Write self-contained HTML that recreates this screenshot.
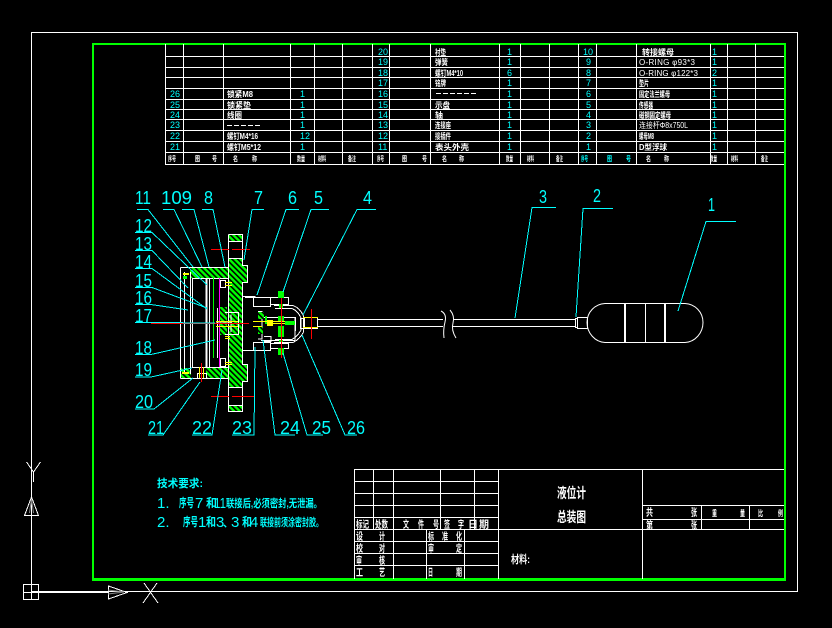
<!DOCTYPE html>
<html><head><meta charset="utf-8"><title>液位计总装图</title>
<style>
html,body{margin:0;padding:0;background:#000;width:832px;height:628px;overflow:hidden}
svg{display:block;position:absolute;left:0;top:0}
text{font-family:"Liberation Sans","Noto Sans CJK SC",sans-serif}
.w{fill:#fff}.c{fill:#0ff}
.n{font-size:9px;fill:#0ff}
.t{font-size:8px;fill:#fff;font-weight:700}
.h{font-size:7px;fill:#fff;font-weight:700}
.hc{font-size:7px;fill:#0ff;font-weight:700}
.l{font-size:18px;fill:#0ff}
.b{font-size:10px;fill:#fff;font-weight:700}
.k{font-size:11px;fill:#0ff;font-weight:700}
.d{font-size:15px;fill:#0ff}
</style></head><body>
<svg width="832" height="628" viewBox="0 0 832 628" xmlns="http://www.w3.org/2000/svg">
<defs>
<pattern id="h" width="4" height="4" patternUnits="userSpaceOnUse" patternTransform="rotate(45)">
<rect width="4" height="4" fill="#000"/><rect width="4" height="2.4" fill="#0f0"/>
</pattern>
</defs>
<rect width="832" height="628" fill="#000"/>

<!-- frame -->
<g shape-rendering="crispEdges" fill="none" stroke="#fff">
<path d="M31.5 32.5H797.5V591.5H31.5Z"/>
</g>
<g fill="#0f0" shape-rendering="crispEdges">
<rect x="92" y="43" width="694" height="2"/>
<rect x="92" y="578" width="694" height="3"/>
<rect x="92" y="43" width="2" height="538"/>
<rect x="784" y="43" width="2" height="538"/>
</g>

<!-- origin icon -->
<g shape-rendering="crispEdges" fill="none" stroke="#fff">
<rect x="23.5" y="584.5" width="15" height="15"/>
<path d="M31.5 584.5V599.5M23.5 592.5H38.5"/>
<path d="M38 592H108" stroke-width="2"/>
<path d="M108.5 586V599L127 592.5Z"/>
<path d="M31.5 497L24.5 515.5H38.5Z"/>
<path d="M26.5 462L33.5 472L40.5 462M33.5 472V482"/>
<path d="M144 583L158 603M157 583L143 603"/>
</g>
<path d="M108 590L124 592M108 594L124 592M29.5 513L31.5 499M33.5 513L31.5 499" stroke="#888" fill="none"/>

<!-- parts table -->
<g shape-rendering="crispEdges" fill="none" stroke="#fff">
<path d="M165 56.5H784M165 67.5H784M165 77.5H784M165 88.5H784M165 99.5H784M165 109.5H784M165 119.5H784M165 130.5H784M165 141.5H784M165 152.5H784M165 164.5H784"/>
<path d="M165.5 44V164M183.5 44V164M223.5 44V164M290.5 44V164M314.5 44V164M342.5 44V164M372.5 44V164M389.5 44V164M430.5 44V164M499.5 44V164M520.5 44V164M549.5 44V164M578.5 44V164M596.5 44V164M636.5 44V164M710.5 44V164M727.5 44V164M755.5 44V164"/>
</g>
<g class="n">
<text x="378" y="55">20</text><text x="378" y="65">19</text><text x="378" y="76">18</text><text x="378" y="86">17</text><text x="378" y="97">16</text><text x="378" y="108">15</text><text x="378" y="118">14</text><text x="378" y="128">13</text><text x="378" y="139">12</text><text x="378" y="150">11</text>
<text x="170" y="97">26</text><text x="170" y="108">25</text><text x="170" y="118">24</text><text x="170" y="128">23</text><text x="170" y="139">22</text><text x="170" y="150">21</text>
<text x="300" y="97">1</text><text x="300" y="108">1</text><text x="300" y="118">1</text><text x="300" y="128">1</text><text x="300" y="139" >12</text><text x="300" y="150">1</text>
<text x="507" y="55">1</text><text x="507" y="65">1</text><text x="507" y="76">6</text><text x="507" y="86">1</text><text x="507" y="97">1</text><text x="507" y="108">1</text><text x="507" y="118">1</text><text x="507" y="128">1</text><text x="507" y="139">1</text><text x="507" y="150">1</text>
<text x="583" y="55">10</text><text x="586" y="65">9</text><text x="586" y="76">8</text><text x="586" y="86">7</text><text x="586" y="97">6</text><text x="586" y="108">5</text><text x="586" y="118">4</text><text x="586" y="128">3</text><text x="586" y="139">2</text><text x="586" y="150">1</text>
<text x="712" y="55">1</text><text x="712" y="65">1</text><text x="712" y="76">2</text><text x="712" y="86">1</text><text x="712" y="97">1</text><text x="712" y="108">1</text><text x="712" y="118">1</text><text x="712" y="128">1</text><text x="712" y="139">1</text><text x="712" y="150">1</text>
</g>
<g class="t">
<text x="227" y="97" textLength="26" lengthAdjust="spacingAndGlyphs">锁紧M8</text>
<text x="227" y="108" textLength="24" lengthAdjust="spacingAndGlyphs">锁紧垫</text>
<text x="227" y="118" textLength="15" lengthAdjust="spacingAndGlyphs">线圈</text>
<text x="227" y="139" textLength="31" lengthAdjust="spacingAndGlyphs">螺钉M4*16</text>
<text x="227" y="150" textLength="34" lengthAdjust="spacingAndGlyphs">螺钉M5*12</text>
<text x="435" y="55" textLength="11" lengthAdjust="spacingAndGlyphs">衬垫</text>
<text x="435" y="65" textLength="13" lengthAdjust="spacingAndGlyphs">弹簧</text>
<text x="435" y="76" textLength="28" lengthAdjust="spacingAndGlyphs">螺钉M4*10</text>
<text x="435" y="86" textLength="11" lengthAdjust="spacingAndGlyphs">铭牌</text>
<text x="435" y="108" textLength="15" lengthAdjust="spacingAndGlyphs">示盘</text>
<text x="435" y="118" textLength="8" lengthAdjust="spacingAndGlyphs">轴</text>
<text x="435" y="128" textLength="16" lengthAdjust="spacingAndGlyphs">连接座</text>
<text x="435" y="139" textLength="16" lengthAdjust="spacingAndGlyphs">接插件</text>
<text x="435" y="150" textLength="34" lengthAdjust="spacingAndGlyphs">表头外壳</text>
<text x="642" y="55" textLength="32" lengthAdjust="spacingAndGlyphs">转接螺母</text>
<text x="639" y="65" textLength="56" lengthAdjust="spacing" style="font-weight:400">O-RING φ93*3</text>
<text x="639" y="76" textLength="59" lengthAdjust="spacing" style="font-weight:400">O-RING φ122*3</text>
<text x="639" y="86" textLength="10" lengthAdjust="spacingAndGlyphs">垫片</text>
<text x="639" y="97" textLength="31" lengthAdjust="spacingAndGlyphs">固定法兰螺母</text>
<text x="639" y="108" textLength="14" lengthAdjust="spacingAndGlyphs">传感器</text>
<text x="639" y="118" textLength="32" lengthAdjust="spacingAndGlyphs">磁钢固定螺母</text>
<text x="639" y="128" textLength="49" lengthAdjust="spacingAndGlyphs" style="font-weight:400">连接杆Φ8x750L</text>
<text x="639" y="139" textLength="15" lengthAdjust="spacingAndGlyphs">螺母M8</text>
<text x="639" y="150" textLength="28" lengthAdjust="spacingAndGlyphs">D型浮球</text>
</g>
<g shape-rendering="crispEdges" stroke="#fff" fill="none">
<path d="M436 93.5H478M227 125.5H260" stroke-dasharray="5 2"/>
</g>
<g class="h">
<text x="168" y="161" textLength="8" lengthAdjust="spacingAndGlyphs">序号</text>
<text x="195" y="161" textLength="5" lengthAdjust="spacingAndGlyphs">图</text><text x="212" y="161" textLength="5" lengthAdjust="spacingAndGlyphs">号</text>
<text x="233" y="161" textLength="5" lengthAdjust="spacingAndGlyphs">名</text><text x="252" y="161" textLength="5" lengthAdjust="spacingAndGlyphs">称</text>
<text x="297" y="161" textLength="8" lengthAdjust="spacingAndGlyphs">数量</text>
<text x="318" y="161" textLength="8" lengthAdjust="spacingAndGlyphs">材料</text>
<text x="348" y="161" textLength="8" lengthAdjust="spacingAndGlyphs">备注</text>
<text x="377" y="161" textLength="7" lengthAdjust="spacingAndGlyphs">序号</text>
<text x="402" y="161" textLength="5" lengthAdjust="spacingAndGlyphs">图</text><text x="422" y="161" textLength="5" lengthAdjust="spacingAndGlyphs">号</text>
<text x="442" y="161" textLength="5" lengthAdjust="spacingAndGlyphs">名</text><text x="459" y="161" textLength="5" lengthAdjust="spacingAndGlyphs">称</text>
<text x="506" y="161" textLength="7" lengthAdjust="spacingAndGlyphs">数量</text>
<text x="527" y="161" textLength="7" lengthAdjust="spacingAndGlyphs">材料</text>
<text x="556" y="161" textLength="7" lengthAdjust="spacingAndGlyphs">备注</text>
<text x="646" y="161" textLength="5" lengthAdjust="spacingAndGlyphs">名</text><text x="664" y="161" textLength="5" lengthAdjust="spacingAndGlyphs">称</text>
<text x="710" y="161" textLength="7" lengthAdjust="spacingAndGlyphs">数量</text>
<text x="731" y="161" textLength="7" lengthAdjust="spacingAndGlyphs">材料</text>
<text x="761" y="161" textLength="7" lengthAdjust="spacingAndGlyphs">备注</text>
</g>
<g class="hc">
<text x="581" y="161" textLength="7" lengthAdjust="spacingAndGlyphs">序号</text>
<text x="607" y="161" textLength="5" lengthAdjust="spacingAndGlyphs">图</text><text x="626" y="161" textLength="5" lengthAdjust="spacingAndGlyphs">号</text>
</g>

<!-- title block -->
<g shape-rendering="crispEdges" stroke="#fff" fill="none">
<path d="M354.5 469.5H784M354.5 481.5H498M354.5 493.5H498M354.5 505.5H498M354.5 517.5H498M354.5 529.5H784M354.5 541.5H498M354.5 553.5H498M354.5 565.5H498"/>
<path d="M642 505.5H784M642 519.5H784"/>
<path d="M354.5 469V579M373.5 469V529M393.5 469V579M440.5 469V529M474.5 469V529M426.5 529V579M464.5 529V579M498.5 469V579M642.5 469V579M701.5 505V529M749.5 505V529"/>
</g>
<g class="b">
<text x="557" y="498" style="font-size:14px" textLength="29" lengthAdjust="spacingAndGlyphs">液位计</text>
<text x="557" y="522" style="font-size:14px" textLength="29" lengthAdjust="spacingAndGlyphs">总装图</text>
<text x="511" y="563" style="font-size:11px" textLength="19" lengthAdjust="spacingAndGlyphs">材料:</text>
<text x="356" y="528" textLength="13" lengthAdjust="spacingAndGlyphs">标记</text>
<text x="375" y="528" textLength="13" lengthAdjust="spacingAndGlyphs">处数</text>
<text x="403" y="528" textLength="6" lengthAdjust="spacingAndGlyphs">文</text><text x="418" y="528" textLength="6" lengthAdjust="spacingAndGlyphs">件</text><text x="433" y="528" textLength="6" lengthAdjust="spacingAndGlyphs">号</text><text x="444" y="528" textLength="6" lengthAdjust="spacingAndGlyphs">签</text><text x="458" y="528" textLength="6" lengthAdjust="spacingAndGlyphs">字</text>
<text x="468" y="528" textLength="21" lengthAdjust="spacing">日期</text>
<text x="356" y="540" textLength="7" lengthAdjust="spacingAndGlyphs">设</text><text x="379" y="540" textLength="6" lengthAdjust="spacingAndGlyphs">计</text>
<text x="428" y="540" textLength="6" lengthAdjust="spacingAndGlyphs">标</text><text x="442" y="540" textLength="6" lengthAdjust="spacingAndGlyphs">准</text><text x="456" y="540" textLength="6" lengthAdjust="spacingAndGlyphs">化</text>
<text x="356" y="552" textLength="7" lengthAdjust="spacingAndGlyphs">校</text><text x="379" y="552" textLength="6" lengthAdjust="spacingAndGlyphs">对</text>
<text x="428" y="552" textLength="6" lengthAdjust="spacingAndGlyphs">审</text><text x="456" y="552" textLength="6" lengthAdjust="spacingAndGlyphs">定</text>
<text x="356" y="564" textLength="6" lengthAdjust="spacingAndGlyphs">审</text><text x="379" y="564" textLength="6" lengthAdjust="spacingAndGlyphs">核</text>
<text x="356" y="576" textLength="7" lengthAdjust="spacingAndGlyphs">工</text><text x="379" y="576" textLength="6" lengthAdjust="spacingAndGlyphs">艺</text>
<text x="428" y="576" textLength="5" lengthAdjust="spacingAndGlyphs">日</text><text x="456" y="576" textLength="6" lengthAdjust="spacingAndGlyphs">期</text>
<text x="646" y="516" textLength="7" lengthAdjust="spacingAndGlyphs">共</text><text x="691" y="516" textLength="6" lengthAdjust="spacingAndGlyphs">张</text>
<text x="646" y="529" textLength="7" lengthAdjust="spacingAndGlyphs">第</text><text x="691" y="529" textLength="6" lengthAdjust="spacingAndGlyphs">张</text>
<text x="712" y="516" style="font-size:8px" textLength="5" lengthAdjust="spacingAndGlyphs">重</text><text x="740" y="516" style="font-size:8px" textLength="5" lengthAdjust="spacingAndGlyphs">量</text>
<text x="758" y="516" style="font-size:8px" textLength="5" lengthAdjust="spacingAndGlyphs">比</text><text x="778" y="516" style="font-size:8px" textLength="5" lengthAdjust="spacingAndGlyphs">例</text>
</g>

<!-- technical notes -->
<text class="k" x="157" y="487" textLength="46" lengthAdjust="spacingAndGlyphs">技术要求:</text>
<text class="d" x="157" y="508">1.</text>
<text class="k" x="179" y="507" style="font-size:12px" textLength="15" lengthAdjust="spacingAndGlyphs">序号</text>
<text class="d" x="195" y="508">7</text>
<text class="k" x="206" y="507" textLength="11" lengthAdjust="spacingAndGlyphs" style="font-size:12px">和</text>
<text class="d" x="214" y="508" textLength="12" lengthAdjust="spacingAndGlyphs">11</text>
<text class="k" x="226" y="507" textLength="96" lengthAdjust="spacingAndGlyphs">联接后,必须密封,无泄漏。</text>
<text class="d" x="157" y="527">2.</text>
<text class="k" x="183" y="526" style="font-size:12px" textLength="15" lengthAdjust="spacingAndGlyphs">序号</text>
<text class="d" x="198" y="527">1</text>
<text class="k" x="206" y="526" style="font-size:12px" textLength="10" lengthAdjust="spacingAndGlyphs">和</text>
<text class="d" x="216" y="527">3</text>
<text class="k" x="223" y="527" style="font-size:10px">、</text>
<text class="d" x="231" y="527">3</text>
<text class="k" x="242" y="526" style="font-size:12px" textLength="10" lengthAdjust="spacingAndGlyphs">和</text>
<text class="d" x="250" y="527">4</text>
<text class="k" x="260" y="526" textLength="63" lengthAdjust="spacingAndGlyphs">联接前须涂密封胶。</text>

<!-- flange + housing -->
<g shape-rendering="crispEdges">
<rect x="228" y="235" width="14" height="6" fill="url(#h)"/>
<rect x="228" y="258" width="14" height="130" fill="url(#h)"/>
<rect x="228" y="406" width="14" height="5" fill="url(#h)"/>
<rect x="242" y="265" width="5" height="17" fill="url(#h)"/>
<rect x="242" y="364" width="5" height="17" fill="url(#h)"/>
<rect x="190" y="268" width="38" height="10" fill="url(#h)"/>
<rect x="181" y="368" width="10" height="10" fill="url(#h)"/>
<rect x="206" y="368" width="22" height="10" fill="url(#h)"/>
<rect x="219" y="307" width="8" height="28" fill="url(#h)"/>
<rect x="215" y="279" width="6" height="10" fill="#000"/>
<g fill="none" stroke="#fff">
<path d="M228.5 234.5H242.5V265.5H247.5V282.5H242.5V364.5H247.5V381.5H242.5V411.5H228.5V234.5"/>
<path d="M228.5 241.5H242.5M228.5 258.5H242.5M228.5 387.5H242.5M228.5 405.5H242.5"/>
<path d="M180.5 267.5H228.5M180.5 378.5H228.5M180.5 267.5V378.5"/>
<path d="M184.5 272V374M190.5 272V374M192.5 278V368M192 278.5H228M192 367.5H228"/>
<path d="M206.5 278V368" stroke-width="2"/><path d="M209.5 278V368"/><path d="M217.5 308V358"/>
<path d="M242.5 296.5H255.5M242.5 350.5H255.5"/>
<rect x="220.5" y="280.5" width="5" height="7"/>
<rect x="220.5" y="358.5" width="5" height="8"/>
<rect x="197.5" y="373.5" width="9" height="5"/>
<path d="M225 312.5H238.5V334.5H225M231 314.5V332M216 322H232"/>
</g>
<path d="M213.5 278V358" stroke="#0f0" stroke-width="1"/>
<path d="M219.5 278V367" stroke="#f0f" stroke-width="1"/>
<g fill="#ff0">
<rect x="183" y="273" width="6" height="2"/><rect x="182" y="372" width="7" height="2"/>
<rect x="225" y="282" width="7" height="1"/><rect x="225" y="285" width="7" height="1"/>
<rect x="225" y="336" width="5" height="1"/><rect x="225" y="338" width="5" height="1"/>
<rect x="225" y="362" width="7" height="1"/><rect x="225" y="364" width="7" height="1"/>
<rect x="216" y="321" width="22" height="1"/><rect x="216" y="326" width="22" height="1"/>
<rect x="199" y="367" width="1" height="11"/><rect x="203" y="367" width="1" height="11"/>
</g>
<rect x="183" y="276" width="4" height="3" fill="#0f0"/>
<g stroke="#f00" fill="none">
<path d="M211 249.5H229M232 249.5H250"/>
<path d="M211 396.5H229M232 396.5H255"/>
<path d="M151 323.5H249"/>
<path d="M201.5 363V382"/>
</g>
</g>

<!-- right head -->
<g shape-rendering="crispEdges">
<g fill="none" stroke="#fff">
<path d="M245 297.5H253.5M245 350.5H253.5"/>
<rect x="253.5" y="297.5" width="17" height="9"/>
<rect x="253.5" y="342.5" width="17" height="8"/>
<rect x="270.5" y="297.5" width="18" height="7"/>
<rect x="270.5" y="343.5" width="18" height="5"/>
<path d="M274 305.5H293Q300 308 303.5 316V332Q300 339 293 342.5H274"/>
<path d="M275 308.5H292Q298 311 301 318V330Q298 336 292 339.5H275"/>
<path d="M261 317.5H295V340.5H261M295.5 317V331"/>
<rect x="300.5" y="318.5" width="4" height="10"/>
<rect x="303.5" y="317.5" width="14" height="11"/>
<path d="M258 311.5H262V339H258M264 336.5H271V341.5H264"/>
</g>
<rect x="258" y="312" width="6" height="7" fill="url(#h)"/>
<rect x="258" y="327" width="5" height="7" fill="url(#h)"/>
<g fill="#0f0">
<rect x="278" y="291" width="6" height="7"/>
<rect x="279" y="304" width="4" height="4"/>
<rect x="278" y="316" width="6" height="5"/>
<rect x="285" y="321" width="10" height="4"/>
<rect x="278" y="326" width="6" height="11"/>
<rect x="279" y="340" width="4" height="2"/>
<rect x="278" y="348" width="6" height="7"/>
<rect x="265" y="316" width="2" height="8"/>
</g>
<rect x="267" y="320" width="6" height="6" fill="#ff0"/>
<path d="M253 321.5H285M253 326.5H262M273 323.5H285" stroke="#ff0"/>
<path d="M303 317.5H318M303 327.5H318" stroke="#ff0"/>
<path d="M281.5 298V358M311.5 309V339" stroke="#f00"/>
</g>

<!-- rod and float -->
<g fill="none" stroke="#fff">
<path d="M318 319.5H443M318 326.5H443M453 319.5H576M453 326.5H576" shape-rendering="crispEdges"/>
<path d="M441 311Q447 314 445 322T444 338" />
<path d="M450 310Q455 316 453 323T456 338" />
<rect x="577.5" y="317.5" width="10" height="11" shape-rendering="crispEdges"/>
<rect x="575.5" y="318.5" width="2" height="9" shape-rendering="crispEdges"/>
<path d="M605 303.5H685C695 304 703 312 703 322.5C703 333 695 342 685 342.5H605C595 342 587 333 587 322.5C587 312 595 304 605 303.5Z"/>
<g shape-rendering="crispEdges">
<path d="M625 303V342M665 303V342" stroke-width="2"/>
<path d="M645.5 303V342"/>
</g>
</g>

<!-- leaders -->
<g fill="none" stroke="#0ff" shape-rendering="crispEdges">
<path d="M137 209.5H148L193 267"/>
<path d="M163 209.5H174L202 267"/>
<path d="M182 209.5H194L209 267"/>
<path d="M202 209.5H213L225 267"/>
<path d="M135 232.5H152L207 285"/>
<path d="M135 250.5H152L188 288"/>
<path d="M135 268.5H152L207 309"/>
<path d="M135 287.5H152L207 308"/>
<path d="M135 304.5H151L188 310"/>
<path d="M135 322.5H151L215 323"/>
<path d="M135 354.5H151L215 340"/>
<path d="M135 377H151L192 368"/>
<path d="M135 409H154L193 378"/>
<path d="M148 435H163L200 382"/>
<path d="M192 435H212L222 370"/>
<path d="M232 435H254L255 347"/>
<path d="M295 435H275L263 340"/>
<path d="M323 435H307L283 353"/>
<path d="M357 435H345L302 335"/>
<path d="M264 209.5H252L244 260"/>
<path d="M299 209.5H286L257 295"/>
<path d="M329 209.5H311L283 292"/>
<path d="M376 209.5H357L303 315"/>
<path d="M556 207.5H532L515 318"/>
<path d="M613 208.5H583L576 317"/>
<path d="M736 221.5H706L678 311"/>
</g>

<!-- labels -->
<g class="l">
<text x="135" y="204" textLength="16" lengthAdjust="spacingAndGlyphs">11</text>
<text x="161" y="204" textLength="31" lengthAdjust="spacingAndGlyphs">109</text>
<text x="204" y="204" textLength="9" lengthAdjust="spacingAndGlyphs">8</text>
<text x="135" y="232" textLength="17" lengthAdjust="spacingAndGlyphs">12</text>
<text x="135" y="250" textLength="17" lengthAdjust="spacingAndGlyphs">13</text>
<text x="135" y="268" textLength="17" lengthAdjust="spacingAndGlyphs">14</text>
<text x="135" y="287" textLength="17" lengthAdjust="spacingAndGlyphs">15</text>
<text x="135" y="304" textLength="17" lengthAdjust="spacingAndGlyphs">16</text>
<text x="135" y="322" textLength="17" lengthAdjust="spacingAndGlyphs">17</text>
<text x="135" y="354" textLength="17" lengthAdjust="spacingAndGlyphs">18</text>
<text x="135" y="376" textLength="17" lengthAdjust="spacingAndGlyphs">19</text>
<text x="135" y="408" textLength="18" lengthAdjust="spacingAndGlyphs">20</text>
<text x="148" y="434" textLength="16" lengthAdjust="spacingAndGlyphs">21</text>
<text x="192" y="434" textLength="20" lengthAdjust="spacingAndGlyphs">22</text>
<text x="232" y="434" textLength="20" lengthAdjust="spacingAndGlyphs">23</text>
<text x="280" y="434" textLength="20" lengthAdjust="spacingAndGlyphs">24</text>
<text x="312" y="434" textLength="19" lengthAdjust="spacingAndGlyphs">25</text>
<text x="347" y="434" textLength="18" lengthAdjust="spacingAndGlyphs">26</text>
<text x="254" y="204" textLength="9" lengthAdjust="spacingAndGlyphs">7</text>
<text x="288" y="204" textLength="9" lengthAdjust="spacingAndGlyphs">6</text>
<text x="314" y="204" textLength="9" lengthAdjust="spacingAndGlyphs">5</text>
<text x="363" y="204" textLength="9" lengthAdjust="spacingAndGlyphs">4</text>
<text x="539" y="203" textLength="8" lengthAdjust="spacingAndGlyphs">3</text>
<text x="593" y="202" textLength="8" lengthAdjust="spacingAndGlyphs">2</text>
<text x="708" y="211" textLength="7" lengthAdjust="spacingAndGlyphs">1</text>
</g>
</svg>
</body></html>
